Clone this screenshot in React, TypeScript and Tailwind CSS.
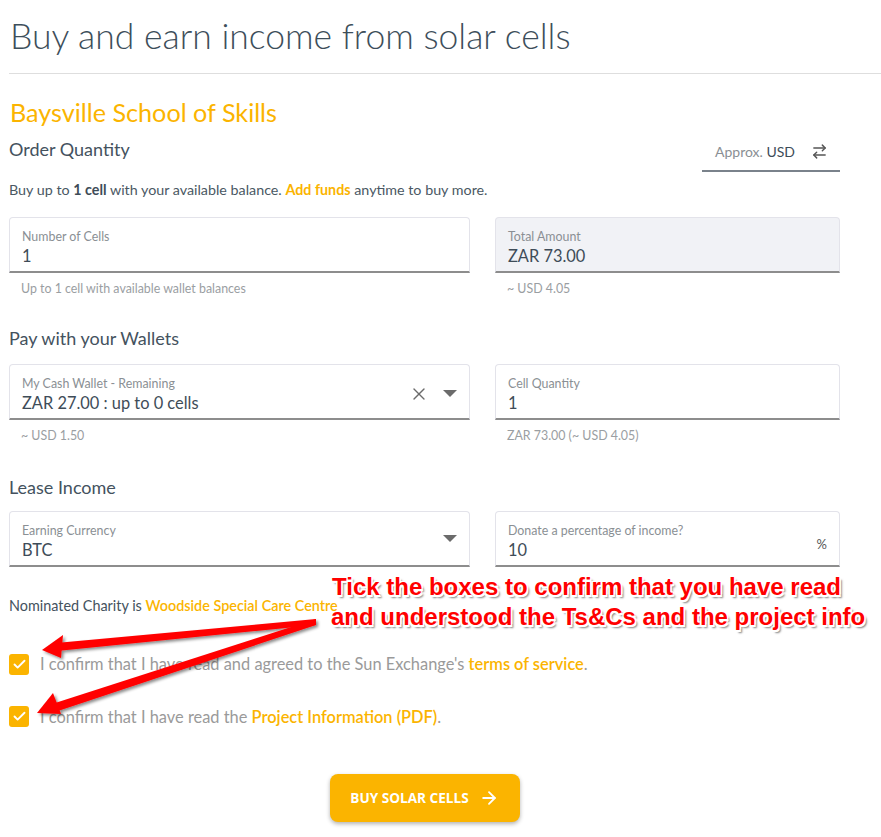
import React from 'react';
import { ArrowRightLeft, ArrowRight, X, Check } from 'lucide-react';

const font = { fontFamily: "Lato, 'Noto Sans', sans-serif" };

const Caret = () => (
  <svg width="14" height="8" viewBox="0 0 14 8" className="shrink-0">
    <path d="M0 0 L14 0 L7 7 Z" fill="#6b6b6b" />
  </svg>
);

interface FieldProps {
  label: string;
  value: string;
  helper?: string;
  shaded?: boolean;
  children?: React.ReactNode;
}

const Field: React.FC<FieldProps> = ({ label, value, helper, shaded, children }) => (
  <div className="flex flex-col">
    <div
      className={`h-[56px] rounded-t border border-[#e3e3ea] border-b-2 border-b-[#8d8d8d] pl-[12px] pr-[12px] flex items-center ${
        shaded ? 'bg-[#f1f2f6]' : 'bg-white'
      }`}
    >
      <div className="flex-1 flex flex-col pt-[8px]">
        <span className="text-[12.4px] leading-[14px] text-[#8a8f94]">{label}</span>
        <span className="text-[16.4px] leading-[22px] text-[#3e4c58] mt-[1px]">{value}</span>
      </div>
      {children}
    </div>
    <div className="h-[30px] pl-[12px] pt-[7px] text-[12.4px] text-[#9a9ea2]">{helper}</div>
  </div>
);

const CheckBox = () => (
  <div className="w-[20px] h-[21px] rounded-[3px] bg-[#fbb400] flex items-center justify-center shrink-0">
    <Check size={15} strokeWidth={3} color="white" />
  </div>
);

export default function App() {
  return (
    <div className="relative w-[881px] h-[837px] bg-white overflow-hidden" style={font}>
      <div className="pl-[9px] pr-[41px]">
        <h1 className="pt-[13px] text-[35.5px] leading-[46px] font-light text-[#3d4e5a] pl-[1px]">
          Buy and earn income from solar cells
        </h1>
        <div className="mt-[14px] h-px bg-[#dedede] -mr-[41px]" />

        <h2 className="mt-[23px] text-[25.2px] leading-[30px] text-[#fbb400] pl-[1px]">
          Baysville School of Skills
        </h2>

        <div className="flex items-start justify-between">
          <div className="text-[18px] leading-[24px] text-[#44525e] pt-[10px]">Order Quantity</div>
          <div className="w-[138px] mt-[11px] border-b-2 border-[#7a828b] h-[34px] flex items-start justify-end pt-[4px] pr-[12px] gap-[16px]">
            <span className="text-[14px] leading-[20px] text-[#3e4c58]">
              <span className="text-[#8a8f94]">Approx.</span> USD
            </span>
            <ArrowRightLeft size={17} color="#555" className="mt-[1px]" />
          </div>
        </div>

        <p className="mt-[7px] text-[14.3px] text-[#4a5863]">
          Buy up to <b className="text-[#3e4c58]">1 cell</b> with your available balance.{' '}
          <b className="text-[#fbb400]">Add funds</b> anytime to buy more.
        </p>

        <div className="mt-[17px] grid grid-cols-[461px_345px] gap-x-[25px]">
          <Field label="Number of Cells" value="1" helper="Up to 1 cell with available wallet balances" />
          <Field label="Total Amount" value="ZAR 73.00" helper="~ USD 4.05" shaded />
        </div>

        <div className="mt-[23px] text-[18px] leading-[24px] text-[#44525e]">Pay with your Wallets</div>

        <div className="mt-[14px] grid grid-cols-[461px_345px] gap-x-[25px]">
          <Field label="My Cash Wallet - Remaining" value="ZAR 27.00 : up to 0 cells" helper="~ USD 1.50">
            <div className="flex items-center gap-[14px] pt-[4px]">
              <X size={20} color="#6b6b6b" strokeWidth={1.6} />
              <Caret />
            </div>
          </Field>
          <Field label="Cell Quantity" value="1" helper="ZAR 73.00 (~ USD 4.05)" />
        </div>

        <div className="mt-[25px] text-[18px] leading-[24px] text-[#44525e]">Lease Income</div>

        <div className="mt-[12px] grid grid-cols-[461px_345px] gap-x-[25px]">
          <Field label="Earning Currency" value="BTC">
            <Caret />
          </Field>
          <Field label="Donate a percentage of income?" value="10">
            <span className="text-[13px] text-[#555] pt-[12px]">%</span>
          </Field>
        </div>

        <p className="-mt-[2px] text-[14.4px] text-[#44525e]">
          Nominated Charity is <span className="text-[#fbb400] font-semibold">Woodside Special Care Centre</span>
        </p>

        <div className="mt-[35px] flex items-center gap-[11px]">
          <CheckBox />
          <span className="text-[16.4px] text-[#9a9a9a]">
            I confirm that I have read and agreed to the Sun Exchange's{' '}
            <span className="text-[#fbb400] font-semibold">terms of service</span>.
          </span>
        </div>

        <div className="mt-[28px] flex items-center gap-[11px]">
          <CheckBox />
          <span className="text-[16.4px] text-[#9a9a9a]">
            I confirm that I have read the{' '}
            <span className="text-[#fbb400] font-semibold">Project Information (PDF)</span>.
          </span>
        </div>

        <div className="mt-[45px] flex justify-center">
          <button
            className="w-[190px] h-[48px] rounded-lg bg-[#fbb400] text-white flex items-center justify-center gap-[10px] shadow-[0_2px_4px_rgba(0,0,0,0.3)]"
            style={{ fontFamily: "'Open Sans', sans-serif" }}
          >
            <span className="text-[13.6px] font-bold">BUY SOLAR CELLS</span>
            <ArrowRight size={20} strokeWidth={2.2} />
          </button>
        </div>
      </div>

      {/* annotation overlay */}
      <svg className="absolute left-0 top-0 pointer-events-none" width="881" height="837">
        <defs>
          <filter id="sh" x="-10%" y="-10%" width="120%" height="140%">
            <feDropShadow dx="2" dy="2" stdDeviation="1.5" floodColor="#000" floodOpacity="0.45" />
          </filter>
        </defs>
        <g fill="#ff0000" filter="url(#sh)">
          <polygon points="316,619 56,643 57,651 316,625" />
          <polygon points="42,650 63,635 61,658" />
          <polygon points="316,619 52,704 55,712 316,625" />
          <polygon points="37,713 53,693 61,714" />
        </g>
      </svg>
      <div
        className="absolute left-[331px] top-[572px] text-[24px] leading-[30px] font-bold text-[#ff0000]"
        style={{
          fontFamily: "'Liberation Sans', Arial, sans-serif",
          textShadow:
            '-1.5px -1.5px 0 #fff, 1.5px -1.5px 0 #fff, -1.5px 1.5px 0 #fff, 1.5px 1.5px 0 #fff, 0 -1.5px 0 #fff, 0 1.5px 0 #fff, 2.5px 2.5px 2px rgba(0,0,0,0.5)',
        }}
      >
        <div className="pl-[1px]">Tick the boxes to confirm that you have read</div>
        <div>and understood the Ts&amp;Cs and the project info</div>
      </div>
    </div>
  );
}
